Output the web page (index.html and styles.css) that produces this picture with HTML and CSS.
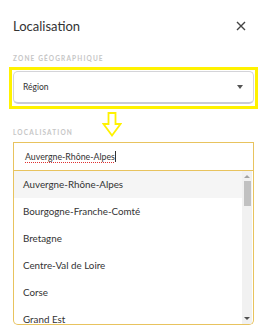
FILE: index.html
```html
<!DOCTYPE html>
<html lang="fr">
<head>
  <meta charset="UTF-8" />
  <title>Localisation</title>
  <link rel="stylesheet" href="styles.css">
</head>
<body>
  <div class="dialog">
    <div class="dialog-header">
      <h2>Localisation</h2>
      <span class="close">
        <svg width="10" height="10" viewBox="0 0 10 10"><path d="M1 1 L9 9 M9 1 L1 9" stroke="#444" stroke-width="1.4"/></svg>
      </span>
    </div>

    <div class="field-label first">Zone géographique</div>
    <div class="highlight">
      <div class="select">
        <span>Région</span>
        <span class="caret"></span>
      </div>
    </div>

    <div class="arrow">
      <svg width="20" height="25" viewBox="0 0 20 25">
        <path d="M6.5 1 H13.5 V12 H18.5 L10 23.5 L1.5 12 H6.5 Z" fill="none" stroke="#fff200" stroke-width="1.8" stroke-linejoin="miter"/>
      </svg>
    </div>

    <div class="field-label">Localisation</div>
    <div class="combo">
      <div class="combo-input"><span class="typed">Auvergne-Rhône-Alpes</span><span class="cursor"></span></div>
      <div class="combo-list">
        <ul class="options">
          <li class="active">Auvergne-Rhône-Alpes</li>
          <li>Bourgogne-Franche-Comté</li>
          <li>Bretagne</li>
          <li>Centre-Val de Loire</li>
          <li>Corse</li>
          <li>Grand Est</li>
        </ul>
        <div class="scrollbar">
          <span class="sb-up"></span>
          <span class="sb-thumb"></span>
          <span class="sb-down"></span>
        </div>
      </div>
    </div>
  </div>
</body>
</html>
```

FILE: styles.css
```css
* {
  box-sizing: border-box;
  margin: 0;
  padding: 0;
}

body {
  background: #fff;
  font-family: Lato, "Open Sans", sans-serif;
  color: #333;
}

.dialog {
  padding: 16px 12px 0 13px;
}

.dialog-header {
  display: flex;
  justify-content: space-between;
  align-items: center;
  height: 20px;
}

.dialog-header h2 {
  font-size: 13px;
  font-weight: normal;
  color: #333;
}

.close {
  display: flex;
  margin-right: 8px;
}

.field-label {
  height: 9px;
  font-size: 6.5px;
  font-weight: bold;
  letter-spacing: 1.15px;
  line-height: 9px;
  text-transform: uppercase;
  color: #c6c6c6;
}

.field-label.first {
  margin-top: 18px;
  margin-bottom: 4px;
}

.highlight {
  margin: 0 -4px 0 -4px;
  border: 3px solid #fff200;
  padding: 1px 1px 2px 1px;
}

.select {
  display: flex;
  justify-content: space-between;
  align-items: center;
  height: 33px;
  padding: 0 10px 0 9px;
  border: 1px solid #d4d4d8;
  border-bottom: 2px solid #c9cbd6;
  border-radius: 5px;
  font-size: 8.5px;
}

.caret {
  width: 0;
  height: 0;
  border-left: 3px solid transparent;
  border-right: 3px solid transparent;
  border-top: 4px solid #555;
}

.arrow {
  display: flex;
  height: 24px;
  margin-top: 3px;
  margin-bottom: -8px;
  padding-left: 89px;
}

.combo {
  margin-top: 5px;
  width: 241px;
}

.combo-input {
  display: flex;
  align-items: center;
  height: 29px;
  padding-left: 11px;
  border: 1px solid #e8c35e;
  font-size: 8.8px;
}

.typed {
  text-decoration: underline dotted #e03030;
  text-underline-offset: 2px;
}

.cursor {
  width: 1px;
  height: 11px;
  background: #333;
}

.combo-list {
  display: flex;
  height: 154px;
  border: 1px solid #e8c35e;
  border-top: none;
  border-radius: 0 0 5px 5px;
  overflow: hidden;
}

.options {
  flex: 1;
  list-style: none;
  font-size: 9.8px;
}

.options li {
  height: 27px;
  line-height: 27px;
  padding-left: 9px;
  white-space: nowrap;
}

.options li.active {
  background: #f5f5f5;
}

.scrollbar {
  display: flex;
  flex-direction: column;
  align-items: center;
  width: 10px;
  margin-right: 1px;
  background: #f1f1f1;
}

.sb-up, .sb-down {
  width: 0;
  height: 0;
  margin-top: 4px;
  border-left: 3px solid transparent;
  border-right: 3px solid transparent;
}

.sb-up {
  border-bottom: 3px solid #a3a3a3;
}

.sb-thumb {
  width: 7px;
  height: 25px;
  margin-top: 3px;
  background: #c1c1c1;
}

.sb-down {
  margin-top: auto;
  margin-bottom: 4px;
  border-top: 3px solid #505050;
}
```
